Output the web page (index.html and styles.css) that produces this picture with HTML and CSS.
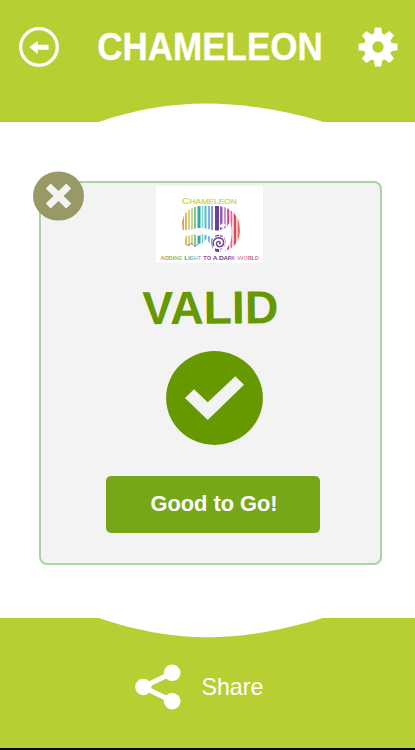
FILE: index.html
```html
<!DOCTYPE html>
<html lang="en">
<head>
<meta charset="utf-8">
<title>Chameleon</title>
<link rel="stylesheet" href="styles.css">
</head>
<body>
<div class="app">
  <header class="header">
    <svg class="back" viewBox="0 0 40 40"><circle cx="20" cy="20" r="18.3" fill="none" stroke="#fff" stroke-width="3.3"/><path d="M10.3 20.3 18.7 13.7V17.7H29.6V22.8H18.7V27Z" fill="#fff"/></svg>
    <svg class="title" viewBox="0 0 230 40"><text x="1.3" y="33" textLength="225.5" lengthAdjust="spacingAndGlyphs">CHAMELEON</text></svg>
    <svg class="gear" viewBox="-20 -20 40 40">
      <defs><path id="tooth" d="M-4.3-12 -3.2-19.5H3.2L4.3-12Z"/></defs>
      <g fill="#fff"><use href="#tooth"/><use href="#tooth" transform="rotate(45)"/><use href="#tooth" transform="rotate(90)"/><use href="#tooth" transform="rotate(135)"/><use href="#tooth" transform="rotate(180)"/><use href="#tooth" transform="rotate(225)"/><use href="#tooth" transform="rotate(270)"/><use href="#tooth" transform="rotate(315)"/></g>
      <circle r="9.9" fill="none" stroke="#fff" stroke-width="8.4"/>
    </svg>
    <svg class="curve curve-top" viewBox="0 0 222 19"><path d="M0 18.5C70-5 136-6 222 18.5V19H0Z" fill="#fff"/></svg>
  </header>

  <main class="main">
    <section class="card">
      <svg class="close" viewBox="0 0 51 50"><ellipse cx="25.5" cy="25" rx="25.5" ry="24.6" fill="#999966"/><path d="M17.8 17.5 33.2 32.5M33.2 17.5 17.8 32.5" stroke="#f3f3f3" stroke-width="7.2" stroke-linecap="square"/></svg>
      <svg class="logo" viewBox="0 0 107 77">
        <defs>
          <clipPath id="body"><path d="M26 37C27 27 34 20 46 20H60C75 20 84 30 84 44C84 58 74 66 62 66C58 66 56 62 55.5 59L50 53 46 58 43 57 39 61 36 58.5 32 60.5 28 58 30 49 26.5 43Z"/></clipPath>
          <linearGradient id="tag" x1="0" x2="1">
            <stop offset="0" stop-color="#e6a13c"/><stop offset=".1" stop-color="#a9a04a"/><stop offset=".18" stop-color="#8ecb9a"/><stop offset=".27" stop-color="#3d9a9c"/><stop offset=".38" stop-color="#8fcfe0"/><stop offset=".46" stop-color="#c04a90"/><stop offset=".56" stop-color="#7a3a8a"/><stop offset=".68" stop-color="#5a3a80"/><stop offset=".76" stop-color="#e0a0c0"/><stop offset=".86" stop-color="#d79aa8"/><stop offset=".93" stop-color="#c84a50"/><stop offset="1" stop-color="#d9a640"/>
          </linearGradient>
        </defs>
        <text class="logo-name" x="26" y="18" textLength="55" lengthAdjust="spacingAndGlyphs">C<tspan class="name-small">HAMELEON</tspan></text>
        <g clip-path="url(#body)">
          <path d="M26 20h58v46H26z" fill="#fff"/>
          <path d="M27 20v46" stroke="#e8975f" stroke-width="2"/>
          <path d="M30 20v46" stroke="#e3b565" stroke-width="2"/>
          <path d="M33 20v46" stroke="#d7d27b" stroke-width="2"/>
          <path d="M36 20v46" stroke="#b8cf73" stroke-width="1.6"/>
          <path d="M39 20v46" stroke="#7fc49b" stroke-width="2"/>
          <path d="M43 20v46" stroke="#35a99c" stroke-width="3"/>
          <path d="M46.5 20v46" stroke="#83d2d1" stroke-width="1.6"/>
          <path d="M49.5 20v46" stroke="#54b9d9" stroke-width="2"/>
          <path d="M53 20v46" stroke="#7cb5e2" stroke-width="2"/>
          <path d="M56 20v46" stroke="#6a85c5" stroke-width="1.6"/>
          <path d="M61 20v46" stroke="#6c3f98" stroke-width="4"/>
          <path d="M65.3 20v46" stroke="#8a58aa" stroke-width="2.4"/>
          <path d="M69 20v46" stroke="#c78bc3" stroke-width="1.8"/>
          <path d="M72.2 20v46" stroke="#bc4a98" stroke-width="2"/>
          <path d="M75.4 20v46" stroke="#e06a9a" stroke-width="1.8"/>
          <path d="M79 20v46" stroke="#d9485c" stroke-width="2.6"/>
          <path d="M82.7 20v46" stroke="#e96b58" stroke-width="2.4"/>
        </g>
        <path d="M26 44C34 45 38 42 46 42C53 42 57 46 64 44L70 42 74 36C77 44 76 53 73 59C71 63 68 66 65 67L64 64C69 62 71 57 69 52C66 47 59 48 56 53L53 50 47 48 42 50 38 48 31 50 27 49Z" fill="#fff"/>
        <path d="M63 40 67 37 70 39 66 42Z" fill="#fff"/>
        <circle cx="62.5" cy="56.5" r="6.6" fill="#fff"/>
        <path d="M57.8 60C55.5 54.5 60 50.8 64.2 52C69 53.5 68.5 60 64.2 60.6C60 61 59.3 56 62.4 55.5C64.5 55.3 65 58 63 58" fill="none" stroke="#744496" stroke-width="1.5"/>
        <path d="M31 59.6 36 57.3 39 60.6 44 57" fill="none" stroke="#6a7774" stroke-width=".7"/>
        <text class="logo-tag" fill="url(#tag)" x="4.2" y="74" textLength="98.6" lengthAdjust="spacingAndGlyphs">A<tspan class="tag-small">DDING</tspan> L<tspan class="tag-small">IGHT</tspan> T<tspan class="tag-small">O</tspan> A D<tspan class="tag-small">ARK</tspan> W<tspan class="tag-small">ORLD</tspan></text>
      </svg>
      <svg class="valid" viewBox="0 0 140 40"><text x="1.6" y="36.3" textLength="136" lengthAdjust="spacingAndGlyphs" transform="rotate(-.5 2 36)">VALID</text></svg>
      <svg class="check" viewBox="0 0 97 94"><ellipse cx="48.5" cy="47" rx="48.4" ry="46.9" fill="#669900"/><path d="M19 47 28 38.2 41.7 51.3 69.3 25.2 78 33.7 41.7 69Z" fill="#f3f3f3"/></svg>
      <button class="go" type="button">Good to Go!</button>
    </section>
  </main>

  <footer class="footer">
    <svg class="curve curve-bottom" viewBox="0 0 222 20"><path d="M0 0V.5C74 25 136 26 222 .2V0Z" fill="#fff"/></svg>
    <svg class="share-icon" viewBox="0 0 46 46"><path d="M37 9 8 23 37 37" fill="none" stroke="#fff" stroke-width="5"/><g fill="#fff"><circle cx="8.3" cy="23" r="8.2"/><circle cx="37.2" cy="8.8" r="8.3"/><circle cx="37.2" cy="37.2" r="8.3"/></g></svg>
    <span class="share-label">Share</span>
  </footer>
</div>
</body>
</html>
```
FILE: styles.css
```css
* { box-sizing: border-box; }
body { margin: 0; background: #fff; font-family: "Liberation Sans", Arial, sans-serif; }
svg { display: block; flex: none; overflow: visible; }
.app { width: 415px; height: 750px; display: flex; flex-direction: column; overflow: hidden; }

.header { position: relative; height: 122px; padding: 26.5px 17px 0 19px; display: flex; align-items: flex-start; background: #b8cf34; flex: none; }
.back { width: 40px; height: 40px; }
.title { width: 230px; height: 40px; margin-left: 37px; }
.title text { font-size: 38px; font-weight: 700; fill: #fff; stroke: #fff; stroke-width: .3px; }
.gear { width: 40px; height: 40px; margin-left: auto; }
.curve { position: absolute; left: 99.5px; width: 222px; }
.curve-top { height: 19px; bottom: 0; }
.curve-bottom { height: 20px; top: 0; }

.main { height: 495.5px; padding: 58.5px 0 0 39px; flex: none; }
.card { position: relative; width: 343px; height: 384px; padding-top: 3.5px; display: flex; flex-direction: column; align-items: center; background: #f3f3f3; border: 2px solid #a8d49f; border-radius: 8px; }
.close { position: absolute; left: -8px; top: -11.5px; width: 51px; height: 50px; }
.logo { width: 107px; height: 77px; margin-right: 2px; background: #fff; }
.logo-name { font-size: 9px; fill: #ccd53a; stroke: #ccd53a; stroke-width: .2px; }
.name-small { font-size: 7.4px; }
.logo-tag { font-size: 5.6px; font-weight: 700; }
.tag-small { font-size: 4.6px; }
.valid { width: 140px; height: 40px; margin-top: 25px; }
.valid text { font-size: 46.5px; font-weight: 700; fill: #669900; }
.check { width: 97px; height: 94px; margin-top: 22.5px; margin-left: 8px; }
.go { width: 214.5px; height: 57.5px; margin-top: 31px; margin-left: 5px; padding: 0 0 1px 2px; border: 0; border-radius: 5px; background: #75a718; color: #fff; font: 700 21.8px/56px "Liberation Sans", Arial, sans-serif; }

.footer { position: relative; flex: 1; padding: 46.5px 0 0 135px; display: flex; align-items: flex-start; background: #b8cf34; border-bottom: 2px solid #080a04; }
.share-icon { width: 46px; height: 46px; }
.share-label { margin-left: 20.5px; color: #fff; font-size: 23.2px; line-height: 46px; }
```
